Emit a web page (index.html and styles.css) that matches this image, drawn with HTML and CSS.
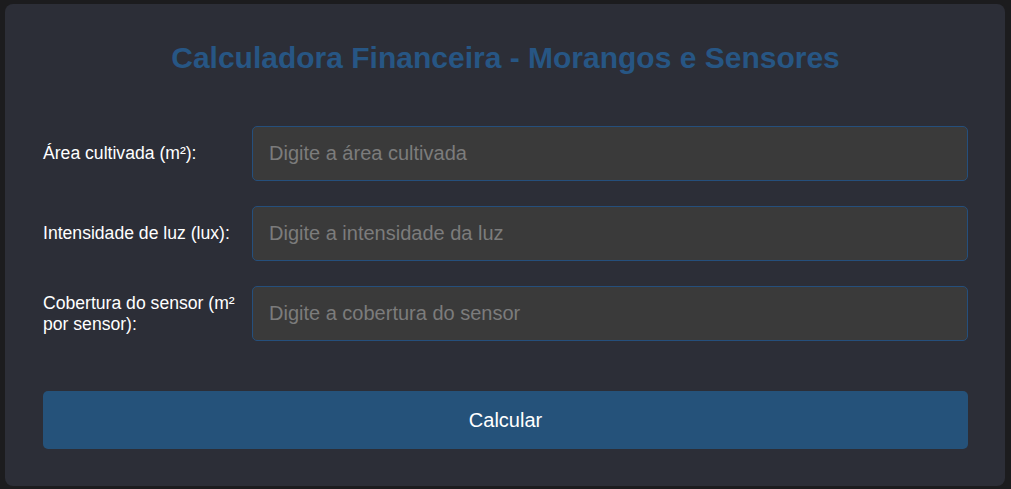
FILE: index.html
```html
<!DOCTYPE html>
<html lang="pt">
<head>
<meta charset="utf-8">
<title>Calculadora Financeira</title>
<link rel="stylesheet" href="styles.css">
</head>
<body>
<div class="card">
  <h1 class="title">Calculadora Financeira - Morangos e Sensores</h1>
  <form class="form">
    <div class="row">
      <label class="label" for="area">Área cultivada (m²):</label>
      <input class="input" id="area" type="text" placeholder="Digite a área cultivada">
    </div>
    <div class="row">
      <label class="label" for="luz">Intensidade de luz (lux):</label>
      <input class="input" id="luz" type="text" placeholder="Digite a intensidade da luz">
    </div>
    <div class="row">
      <label class="label" for="cob">Cobertura do sensor (m² por sensor):</label>
      <input class="input" id="cob" type="text" placeholder="Digite a cobertura do sensor">
    </div>
    <button class="button" type="button">Calcular</button>
  </form>
</div>
</body>
</html>
```
FILE: styles.css
```css
html, body {
  margin: 0;
  padding: 0;
  background: #1c1c1e;
  font-family: "Liberation Sans", Arial, sans-serif;
}
body {
  padding: 4px 6px 3px 5px;
  height: 489px;
  box-sizing: border-box;
}
.card {
  background: #2c2e37;
  border-radius: 8px;
  height: 482px;
  box-sizing: border-box;
  padding: 36px 37px 0 38px;
}
.title {
  margin: 0 0 50px;
  text-align: center;
  color: #275684;
  font-size: 30px;
  font-weight: bold;
  line-height: 36px;
}
.form {
  display: flex;
  flex-direction: column;
  gap: 25px;
}
.row {
  display: flex;
  align-items: center;
}
.label {
  flex: 0 0 209px;
  box-sizing: border-box;
  padding-right: 12px;
  color: #ffffff;
  font-size: 17.6px;
  line-height: 21px;
}
.input {
  flex: 1;
  height: 55px;
  box-sizing: border-box;
  background: #3a3a3a;
  border: 1px solid #254f7c;
  border-radius: 5px;
  padding: 0 16px;
  color: #ffffff;
  font-family: inherit;
  font-size: 20px;
  outline: none;
}
.input::placeholder {
  color: #7c7c7c;
}
.button {
  margin-top: 25px;
  height: 58px;
  border: none;
  border-radius: 5px;
  background: #25527a;
  color: #ffffff;
  font-family: inherit;
  font-size: 20px;
}
```
